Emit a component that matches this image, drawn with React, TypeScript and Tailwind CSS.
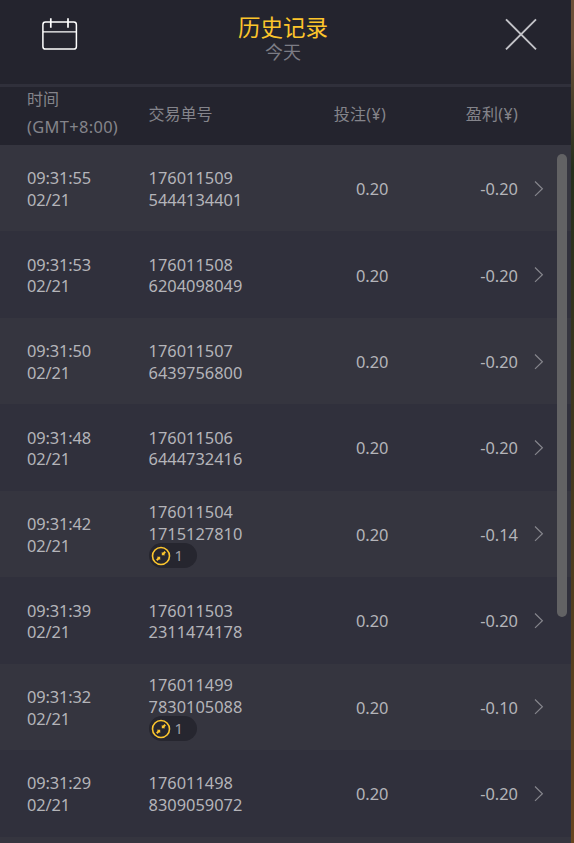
interface HistoryRecord {
  time: string;
  id: [string, string];
  profit: string;
  collapses?: number;
}

const records: HistoryRecord[] = [
  { time: '09:31:55', id: ['176011509', '5444134401'], profit: '-0.20' },
  { time: '09:31:53', id: ['176011508', '6204098049'], profit: '-0.20' },
  { time: '09:31:50', id: ['176011507', '6439756800'], profit: '-0.20' },
  { time: '09:31:48', id: ['176011506', '6444732416'], profit: '-0.20' },
  { time: '09:31:42', id: ['176011504', '1715127810'], profit: '-0.14', collapses: 1 },
  { time: '09:31:39', id: ['176011503', '2311474178'], profit: '-0.20' },
  { time: '09:31:32', id: ['176011499', '7830105088'], profit: '-0.10', collapses: 1 },
  { time: '09:31:29', id: ['176011498', '8309059072'], profit: '-0.20' },
];

function CalendarIcon() {
  return (
    <svg width="36" height="33" viewBox="0 0 36 33" fill="none" stroke="#fff" strokeWidth="1.5">
      <rect x="0.9" y="4.1" width="33.5" height="27" rx="2.6" />
      <path d="M1 13.8H34.5" strokeWidth="1.3" />
      <path d="M8.8 .3V9.8M26 .3V9.8" strokeWidth="1.7" />
    </svg>
  );
}

function CloseIcon() {
  return (
    <svg width="32" height="32" viewBox="0 0 32 32" fill="none" stroke="#c3c3c8" strokeWidth="1.9">
      <path d="M1 1.3L31 31.3M31 1.3L1 31.3" />
    </svg>
  );
}

function ChevronIcon() {
  return (
    <svg width="10" height="17" viewBox="0 0 10 17" fill="none" stroke="#85858c" strokeWidth="1.2">
      <path d="M1 1.5L8.4 8.7L1 15.9" />
    </svg>
  );
}

function CollapseIcon() {
  return (
    <svg width="20" height="20" viewBox="0 0 20 20" fill="none">
      <circle cx="10" cy="10" r="8.5" stroke="#fcc62e" strokeWidth="1.6" />
      <path d="M10.8 9.2V5.9L11.8 6.7L13.6 5.1L14.9 6.4L13.3 8.2L14.1 9.2Z" fill="#fcc62e" />
      <path d="M9.2 10.8V14.1L8.2 13.3L6.4 14.9L5.1 13.6L6.7 11.8L5.9 10.8Z" fill="#fcc62e" />
    </svg>
  );
}

function RecordRow({ record }: { record: HistoryRecord }) {
  return (
    <div className="flex h-[86.45px] shrink-0 items-center pl-[27px] text-[16.4px] leading-[21.6px] text-[#b4b4b9] odd:bg-[#35353f] even:bg-[#30303c]">
      <div className="w-[121.5px] pt-[1.4px] tracking-[-0.12px]">
        <div>{record.time}</div>
        <div>02/21</div>
      </div>
      <div className="w-[140px] pt-[1.4px]">
        <div>{record.id[0]}</div>
        <div>{record.id[1]}</div>
        {record.collapses && (
          <div className="-mt-px flex h-[25px] w-[48px] items-center rounded-full bg-[#26262f] pl-[2px] text-[15px] text-[#a0a0a6]">
            <CollapseIcon />
            <span className="ml-1">{record.collapses}</span>
          </div>
        )}
      </div>
      <div className="w-[100px] pt-[1.5px] text-right">0.20</div>
      <div className="w-[129.5px] pt-[1.5px] text-right">{record.profit}</div>
      <div className="ml-[15.5px]">
        <ChevronIcon />
      </div>
    </div>
  );
}

export default function App() {
  return (
    <div className="flex h-[843px] w-[574px] overflow-hidden bg-[#30303c] font-['Noto_Sans','Noto_Sans_CJK_SC',sans-serif]">
      <div className="relative flex w-[571px] flex-col">
        <header className="flex h-[84px] shrink-0 items-start justify-between bg-[#24242e] pr-[34px] pl-[42px]">
          <button className="mt-[18px]">
            <CalendarIcon />
          </button>
          <div className="mt-[14px] mr-[13px] ml-[-4px] text-center">
            <h1 className="text-[22.5px] leading-[27px] text-[#fdc52b]">历史记录</h1>
            <p className="text-[18px] leading-[22px] text-[#7c7c85]">今天</p>
          </div>
          <button className="mt-[18px]">
            <CloseIcon />
          </button>
        </header>
        <div className="h-[3px] shrink-0 bg-[#30303b]" />

        <div className="flex h-[58px] shrink-0 items-center bg-[#24242e] pb-[4px] pl-[27px] text-[16px] leading-[29px] text-[#84848b]">
          <div className="w-[121.5px] pb-[3px] leading-[28px]">
            <div>时间</div>
            <div className="text-[16.4px] tracking-[0.35px]">(GMT+8:00)</div>
          </div>
          <div className="w-[140px]">交易单号</div>
          <div className="w-[97.5px] text-right tracking-[0.3px]">投注(¥)</div>
          <div className="w-[132px] text-right tracking-[0.3px]">盈利(¥)</div>
        </div>

        <div className="flex min-h-0 flex-1 flex-col overflow-hidden">
          {records.map((record) => (
            <RecordRow key={record.id.join('')} record={record} />
          ))}
          <div className="h-4 shrink-0 bg-[#35353f]" />
        </div>

        {/* scrollbar thumb */}
        <div className="absolute top-[154px] left-[557px] h-[463px] w-[10px] rounded-full bg-[#626264]" />
      </div>

      {/* sliver of the game behind the panel */}
      <div className="w-[3px] bg-linear-to-b from-[#6c5038] from-5% via-[#252f1c] via-20% to-[#68451f]" />
    </div>
  );
}
